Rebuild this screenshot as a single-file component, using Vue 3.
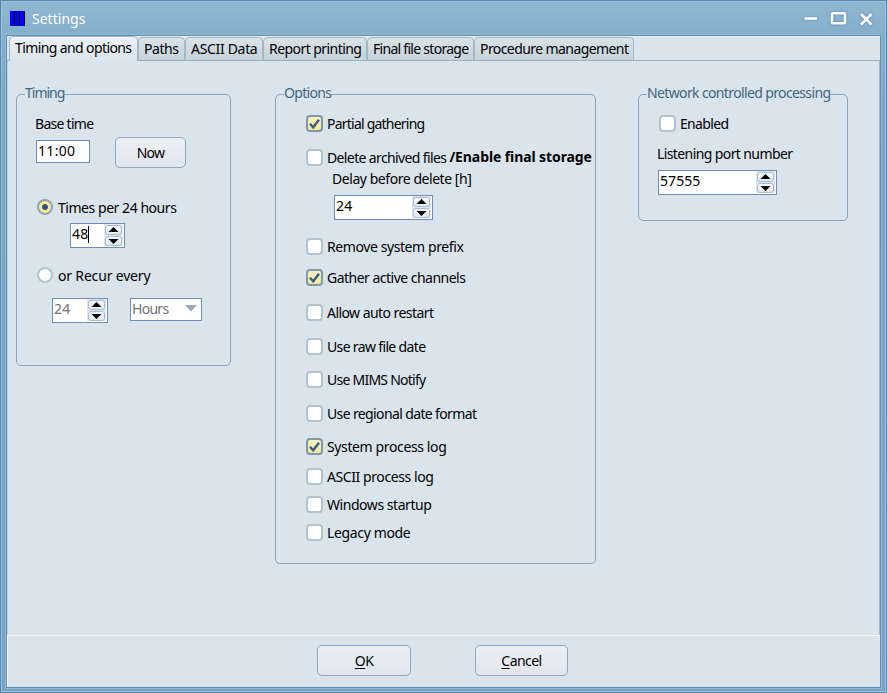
<script setup>
import { defineComponent, h, ref } from 'vue'

// Spreads a label's glyphs so that it fills the given width in pixels.
const vFit = {
  mounted(el, { value }) {
    const natural = el.getBoundingClientRect().width
    el.style.letterSpacing = (value - 0.6 - natural) / el.textContent.length + 'px'
  }
}

const Arrows = defineComponent({
  render: () => h('span', { class: 'arrows' }, [
    h('svg', { class: 'arrow', viewBox: '0 0 15 8' }, [h('path', { d: 'M7.5 1 L12.5 6 H2.5 Z' })]),
    h('svg', { class: 'arrow', viewBox: '0 0 15 8' }, [h('path', { d: 'M7.5 7 L12.5 2 H2.5 Z' })])
  ])
})

const active = ref(0)
const tabs = [
  { text: 'Timing and options', fit: 117, cls: 't0' },
  { text: 'Paths', fit: 35, cls: 't1' },
  { text: 'ASCII Data', fit: 67, cls: 't2' },
  { text: 'Report printing', fit: 93, cls: 't3' },
  { text: 'Final file storage', fit: 96, cls: 't4' },
  { text: 'Procedure management', fit: 149, cls: 't5' }
]
const options = ref([
  { text: 'Remove system prefix', fit: 137, on: false, step: 31 },
  { text: 'Gather active channels', fit: 139, on: true, step: 35 },
  { text: 'Allow auto restart', fit: 107, on: false, step: 34 },
  { text: 'Use raw file date', fit: 99, on: false, step: 33 },
  { text: 'Use MIMS Notify', fit: 99, on: false, step: 34 },
  { text: 'Use regional date format', fit: 150, on: false, step: 33 },
  { text: 'System process log', fit: 120, on: true, step: 30 },
  { text: 'ASCII process log', fit: 107, on: false, step: 28 },
  { text: 'Windows startup', fit: 105, on: false, step: 28 },
  { text: 'Legacy mode', fit: 84, on: false, step: 28 }
])
</script>

<template>
  <div class="window">
    <header class="titlebar">
      <span class="logo"><i></i><i></i></span>
      <span v-fit="54" class="title">Settings</span>
      <svg class="controls" viewBox="0 0 72 20">
        <path d="M2.5 9.5 H15" stroke-width="2.6" />
        <rect x="30" y="4.2" width="13" height="10" rx="1" stroke-width="2.6" />
        <path d="M59 5 L69.500 15.500 M69.500 5 L59 15.500" stroke-width="2.7" />
      </svg>
    </header>

    <div class="client">
      <nav class="tabs">
        <button v-for="(t, i) in tabs" :key="t.text" :class="['tab', t.cls, { active: active === i }]" @click="active = i">
          <span v-fit="t.fit">{{ t.text }}</span>
        </button>
      </nav>

      <main class="page">
        <fieldset class="group timing">
          <legend><span v-fit="40">Timing</span></legend>
          <div class="line"><span v-fit="59">Base time</span></div>
          <div class="base">
            <span class="field time"><span v-fit="38">11:00</span></span>
            <button class="btn now"><span v-fit="28">Now</span></button>
          </div>
          <label class="check radio-row">
            <span class="radio on"></span><span v-fit="119">Times per 24 hours</span>
          </label>
          <span class="field spin times"><span v-fit="17">48</span><i class="caret"></i><Arrows /></span>
          <label class="check radio-row second">
            <span class="radio"></span><span v-fit="93">or Recur every</span>
          </label>
          <div class="recur">
            <span class="field spin every disabled"><span v-fit="17">24</span><Arrows /></span>
            <span class="field combo disabled">
              <span v-fit="37">Hours</span>
              <svg class="drop" viewBox="0 0 12 7"><path d="M0 0 H12 L6 6.500 Z" /></svg>
            </span>
          </div>
        </fieldset>

        <fieldset class="group options">
          <legend><span v-fit="48">Options</span></legend>
          <label class="check first">
            <span class="box on"><svg viewBox="0 0 17 17"><path d="M4 8.800 L7.200 12.300 L13 4.800" /></svg></span>
            <span v-fit="98">Partial gathering</span>
          </label>
          <label class="check">
            <span class="box"></span>
            <span v-fit="120">Delete archived files</span>
            <b v-fit="143">/Enable final storage</b>
          </label>
          <div class="line delay"><span v-fit="140">Delay before delete [h]</span></div>
          <span class="field spin delay-field"><span v-fit="17">24</span><Arrows /></span>
          <label v-for="o in options" :key="o.text" class="check" :style="{ height: o.step + 'px' }" @click="o.on = !o.on">
            <span :class="['box', { on: o.on }]">
              <svg v-if="o.on" viewBox="0 0 17 17"><path d="M4 8.800 L7.200 12.300 L13 4.800" /></svg>
            </span>
            <span v-fit="o.fit">{{ o.text }}</span>
          </label>
        </fieldset>

        <fieldset class="group network">
          <legend><span v-fit="184">Network controlled processing</span></legend>
          <label class="check enabled"><span class="box"></span><span v-fit="49">Enabled</span></label>
          <div class="line port"><span v-fit="136">Listening port number</span></div>
          <span class="field spin port-field"><span v-fit="41">57555</span><Arrows /></span>
        </fieldset>
      </main>

      <footer class="footer">
        <button class="btn ok"><span v-fit="19"><u>O</u>K</span></button>
        <button class="btn cancel"><span v-fit="41"><u>C</u>ancel</span></button>
      </footer>
    </div>
  </div>
</template>

<style>
body { background: #7aa6c6; }
.arrows {
  display: flex;
  flex-direction: column;
  gap: 1px;
  margin-left: auto;
  padding: 1px 1px 0;
  background: #dfe7f1;
}
.arrow {
  display: block;
  box-sizing: border-box;
  width: 17px;
  height: 10px;
  border: 1px solid #a9bbd3;
  border-radius: 3px;
  background: linear-gradient(#f8fafc, #e3e8f1);
}
</style>

<style scoped>
* { box-sizing: border-box; }
.window {
  width: 887px;
  height: 693px;
  padding: 1px 5px 4px;
  border: 1px solid #5887ae;
  background: linear-gradient(#90b8d3, #84aecb 35px, #7ba7c7 100px, #76a3c5);
  box-shadow: inset 0 0 0 1px #9bc1da;
  font: 14px/20px "Noto Sans", sans-serif;
  color: #000;
  white-space: nowrap;
}
button { font: inherit; color: inherit; }
.titlebar {
  display: flex;
  align-items: center;
  height: 33px;
  padding: 0 7px 0 4px;
}
.logo {
  display: flex;
  justify-content: space-evenly;
  width: 15px;
  height: 15px;
  margin-right: 7px;
  background: #0000fe;
  border-right: 1px solid #000;
}
.logo i { width: 1px; background: #000; }
.title { color: #fff; }
.controls {
  width: 72px;
  height: 20px;
  margin-left: auto;
  fill: none;
  stroke: #fff;
  filter: drop-shadow(0 0 1px #4d7ba0);
}
.client {
  display: flex;
  flex-direction: column;
  height: 653px;
  border: 1px solid #5f8db3;
  background: #dae4ec;
  box-shadow: 0 0 0 1px #8fb9d4;
}
.tabs {
  display: flex;
  align-items: flex-end;
  height: 25px;
  padding-left: 2px;
  border-bottom: 1px solid #9bb3c6;
  box-shadow: inset 0 1px #e8f0f6;
}
.tab {
  height: 23px;
  padding: 0 0 0 5px;
  border: 1px solid #a3b7c6;
  border-bottom: 0;
  border-radius: 5px 5px 0 0;
  background: linear-gradient(#d9e3e8, #c6d3da);
  text-align: left;
}
.tab.active {
  height: 25px;
  margin-bottom: -1px;
  padding-bottom: 3px;
  background: linear-gradient(#edf2f6, #dae4ec);
}
.t0 { width: 129px; }
.t1 { width: 47px; }
.t2 { width: 78px; }
.t3 { width: 104px; }
.t4 { width: 107px; }
.t5 { width: 160px; }
.page {
  display: flex;
  align-items: flex-start;
  height: 574px;
  padding: 23px 0 0 8px;
  border-right: 1px solid #a8bac8;
  border-left: 1px solid #c0cfdb;
}
.group {
  display: flex;
  flex-direction: column;
  align-items: flex-start;
  margin: 0;
  padding: 0;
  border: 1px solid #8aa2c2;
  border-radius: 5px;
}
legend { height: 20px; margin-left: 8px; padding: 0; line-height: 18px; color: #41677f; }
.timing { width: 215px; height: 282px; }
.options { width: 321px; height: 480px; margin-left: 44px; }
.network { width: 210px; height: 137px; margin-left: 42px; }
.line { height: 20px; margin: 10px 0 0 18px; }
.field {
  display: flex;
  height: 23px;
  padding-left: 1px;
  border: 1px solid #6f8db5;
  background: #fff;
}
.spin { height: 25px; }
.spin .arrows { width: 19px; height: 22px; margin-right: 1px; }
.base { display: flex; align-items: flex-start; margin: 3px 0 0 19px; }
.time { width: 54px; margin-top: 3px; }
.btn {
  padding: 0;
  height: 31px;
  border: 1px solid #90a6c5;
  border-radius: 5px;
  background: linear-gradient(#edf0f3, #e1e6ef);
}
.now { width: 71px; margin-left: 25px; }
.check { display: flex; align-items: flex-start; height: 34px; margin-left: 30px; }
.first { margin-top: 10px; }
.box {
  width: 17px;
  height: 17px;
  margin: 1px 4px 0 0;
  border: 2px solid #b3c3cc;
  border-radius: 4px;
  background: #fff;
}
.box.on { border-color: #8199a5; background: linear-gradient(#f8f3c4, #f0e797); }
.box svg {
  display: block;
  width: 17px;
  height: 17px;
  margin: -2px;
  fill: none;
  stroke: #3d5b86;
  stroke-width: 2.4;
}
.check b { margin: -1px 0 0 3px; }
.radio-row { height: 20px; margin: 30px 0 0 20px; }
.radio {
  width: 16px;
  height: 16px;
  margin: 1px 5px 0 0;
  border: 2px solid #b3c3cc;
  border-radius: 50%;
  background: #fff;
}
.radio.on {
  border-color: #91a5ad;
  background: radial-gradient(circle, #36547f 0 2.500px, #f3eb9f 3.500px);
}
.times { width: 55px; margin: 5px 0 0 53px; }
.caret { width: 1px; height: 17px; margin-top: 2px; background: #000; }
.second { margin-top: 18px; }
.recur { display: flex; align-items: flex-start; margin: 12px 0 0 35px; }
.every { width: 56px; }
.combo { width: 72px; margin-left: 22px; }
.disabled { color: #747474; }
.drop { width: 12px; height: 7px; margin: 6px 4px 0 auto; fill: #9aa8bd; }
.delay { margin: -13px 0 0 56px; }
.delay-field { width: 99px; margin: 6px 0 17px 58px; }
.enabled { margin: 10px 0 0 20px; height: 30px; }
.port { margin-top: 0; }
.port-field { width: 119px; margin: 6px 0 0 19px; }
.footer {
  display: flex;
  flex: 1;
  align-items: flex-start;
  padding: 9px 0 0 309px;
  border-top: 1px solid #f3f7fa;
  border-left: 1px solid #f3f7fa;
}
.ok { width: 94px; }
.cancel { width: 93px; margin-left: 64px; }
u { text-underline-offset: 2px; }
</style>
